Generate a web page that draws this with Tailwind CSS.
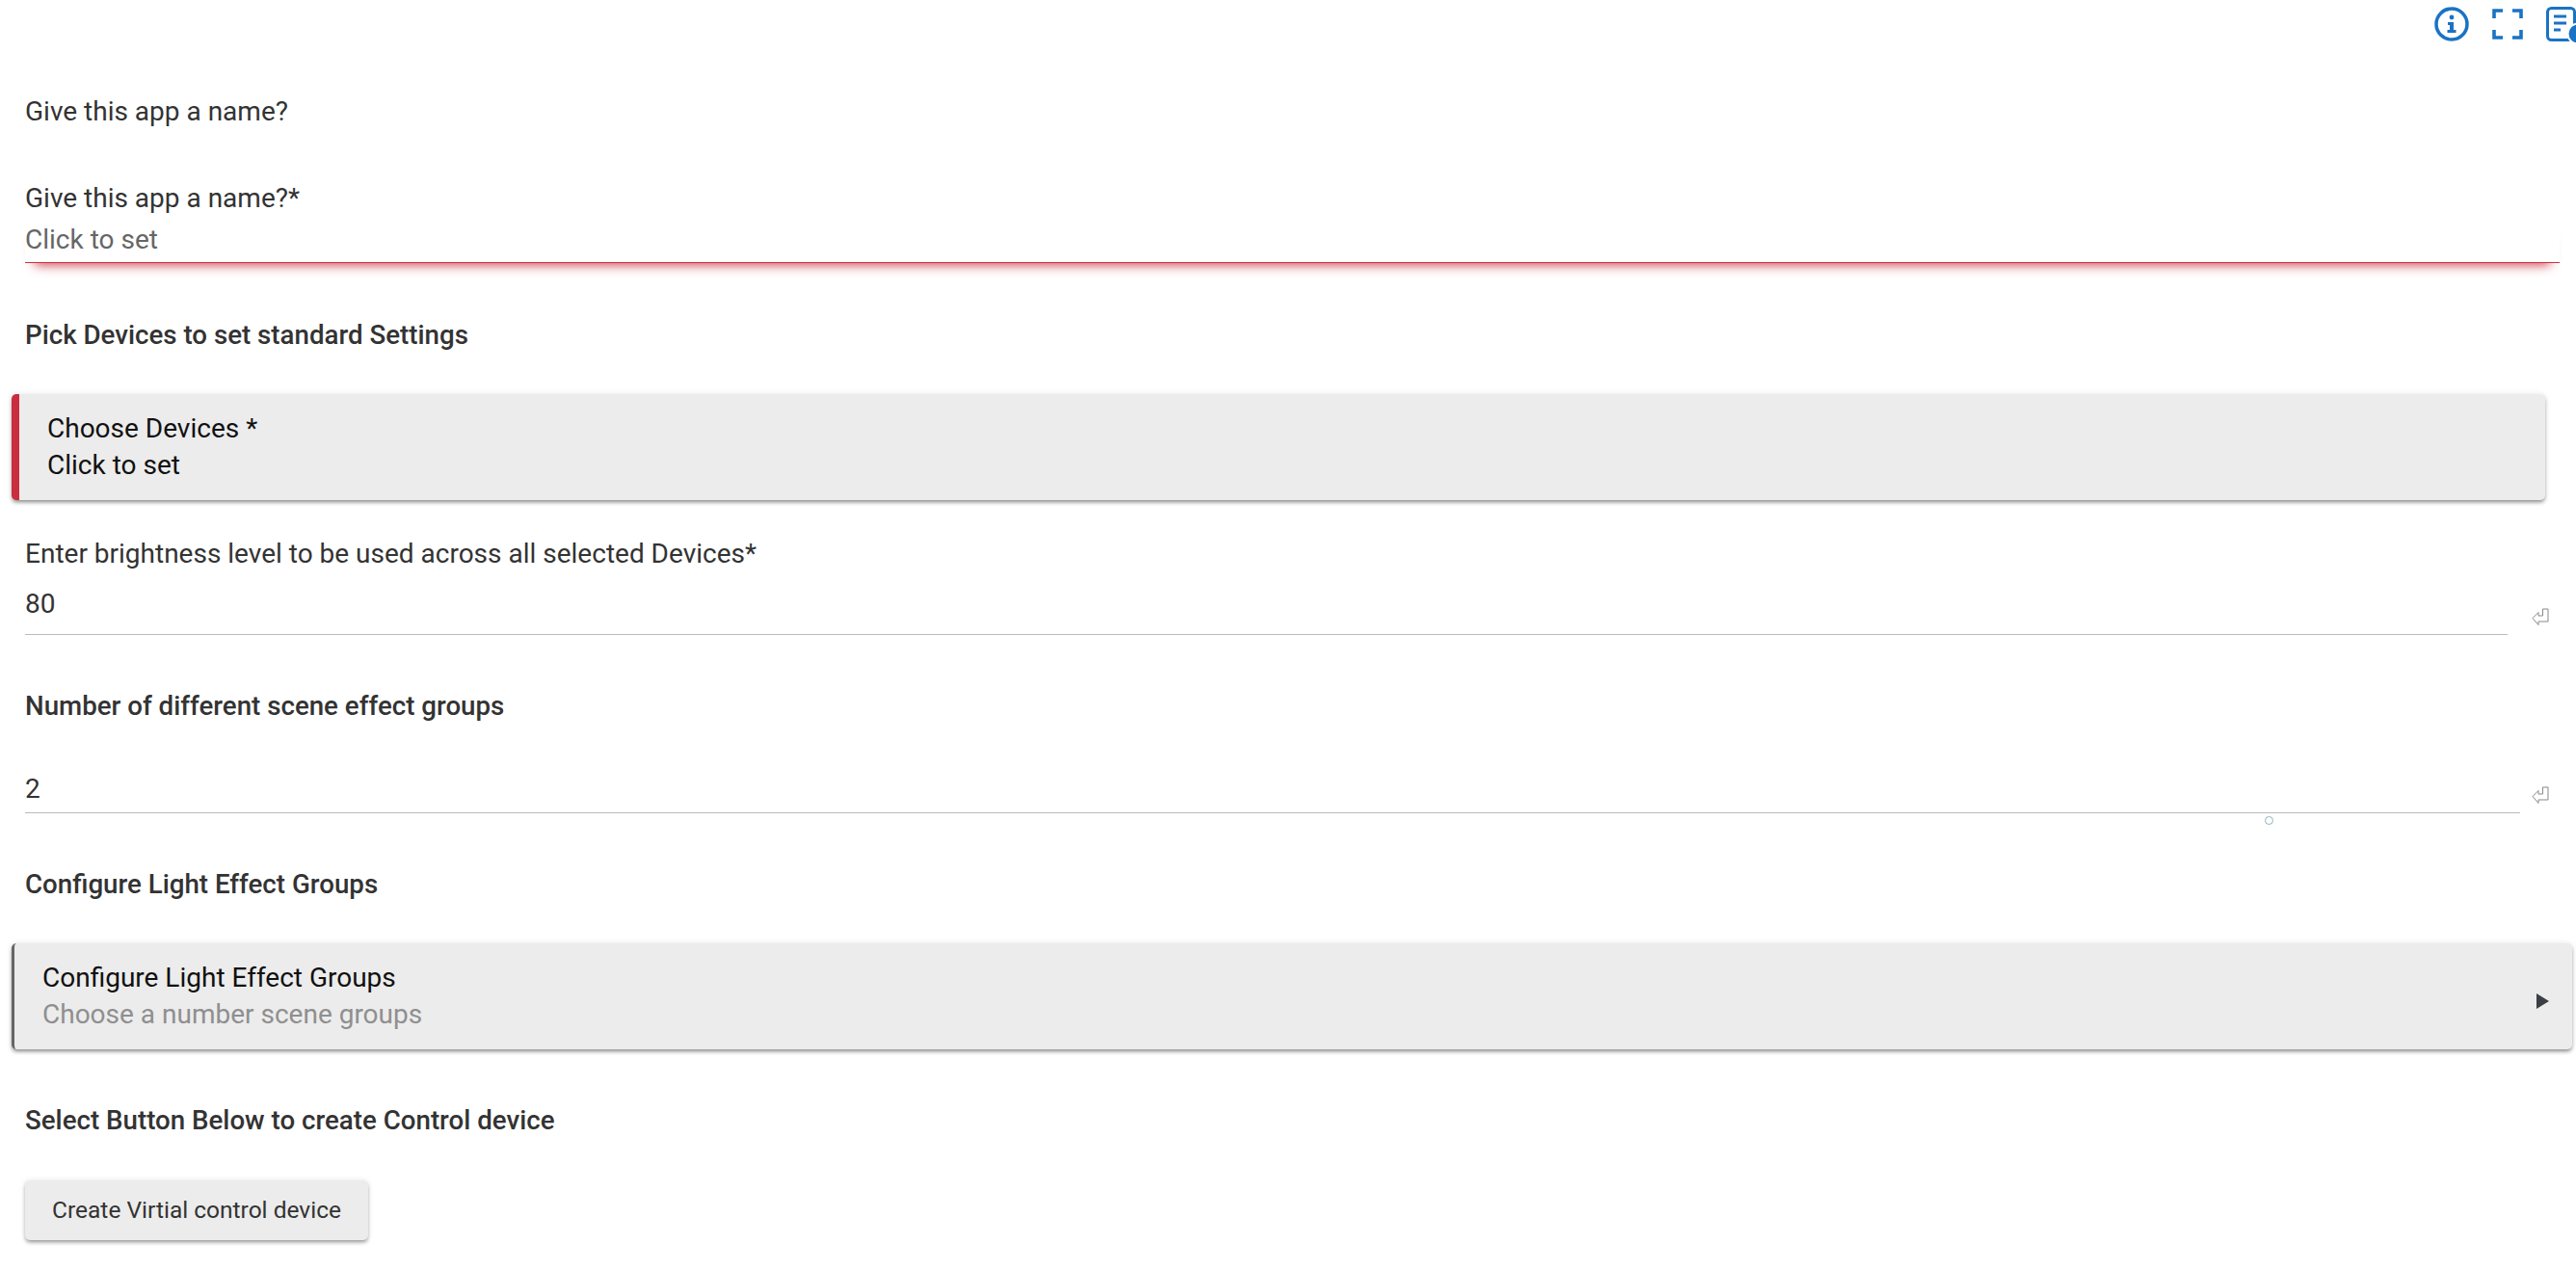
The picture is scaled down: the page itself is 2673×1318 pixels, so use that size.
<!DOCTYPE html>
<html lang="en">
<head>
    <meta charset="UTF-8">
    <meta name="viewport" content="width=device-width, initial-scale=1.0">
    <title>Create App</title>
    <script src="https://cdn.jsdelivr.net/npm/@tailwindcss/browser@4"></script>
</head>
<body class="bg-white font-['Roboto',sans-serif] text-[28px] leading-[42px] text-[#333] overflow-hidden h-[1318px] relative">
    <!-- top right tools -->
    <div class="h-[95px] flex justify-end items-start gap-[24px] pt-[7px] mr-[-13px] text-[#1a73c4]">
        <svg class="w-[36px] h-[36px]" viewBox="0 0 36 36" fill="none">
            <circle cx="18" cy="18" r="16" stroke="currentColor" stroke-width="3.5"/>
            <circle cx="18" cy="11" r="2.4" fill="currentColor"/>
            <path d="M14 16h6v8h2.500v3h-9v-3h2.500v-5h-2z" fill="currentColor"/>
        </svg>
        <svg class="w-[32px] h-[32px] mt-[2px]" viewBox="0 0 32 32" fill="none" stroke="currentColor" stroke-width="3.600">
            <path d="M2 10V2h9M21 2h9v8M30 22v8h-9M11 30H2v-8"/>
        </svg>
        <svg class="w-[44px] h-[37px]" viewBox="0 0 44 37" fill="none">
            <rect x="1.500" y="1.500" width="28" height="33" rx="4" stroke="currentColor" stroke-width="3"/>
            <path d="M8 10h13M8 17h13M8 24h7" stroke="currentColor" stroke-width="3"/>
            <circle cx="33" cy="28" r="10.500" fill="currentColor" stroke="white" stroke-width="2"/>
        </svg>
    </div>

    <div class="pl-[26px]">
        <div>Give this app a name?</div>

        <div class="mt-[48px]">Give this app a name?*</div>
        <div class="mt-[1px] pb-[2px] mr-[17px] text-[#666] border-b border-[#c9303f] shadow-[0_12px_12px_-10px_rgba(201,48,63,0.9)]">Click to set</div>

        <div class="mt-[54px] font-medium text-[27.7px]">Pick Devices to set standard Settings</div>
    </div>

    <div class="mt-[40px] ml-[12px] w-[2629px] h-[110px] pl-[29px] pt-[17px] bg-[#ececec] border-l-[8px] border-[#c92d3e] rounded-[5px] leading-[38px] text-[#111] shadow-[0_3px_4px_-1px_rgba(0,0,0,0.45),0_0_6px_rgba(0,0,0,0.1)]">
        <div>Choose Devices *</div>
        <div>Click to set</div>
    </div>

    <div class="pl-[26px]">
        <div class="mt-[35px]">Enter brightness level to be used across all selected Devices*</div>
        <div class="flex items-end">
            <div class="mt-[10px] pb-[10px] w-[2576px] border-b border-[#bbb]">80</div>
            <svg class="ml-[25px] mb-[10px] w-[18px] h-[18px]" viewBox="0 0 18 18" fill="none" stroke="#888" stroke-width="1">
                <path d="M1 10.500 7 4.500V8h4.500V1H17v13H7v3.500z"/>
            </svg>
        </div>

        <div class="mt-[53px] font-medium text-[27.7px]">Number of different scene effect groups</div>
        <div class="flex items-end">
            <div class="mt-[44px] pb-[3px] w-[2589px] border-b border-[#bbb]">2</div>
            <svg class="ml-[12px] mb-[10px] w-[18px] h-[18px]" viewBox="0 0 18 18" fill="none" stroke="#888" stroke-width="1">
                <path d="M1 10.500 7 4.500V8h4.500V1H17v13H7v3.500z"/>
            </svg>
        </div>

        <div class="mt-[53px] font-medium text-[27.7px]">Configure Light Effect Groups</div>
    </div>

    <!-- small marker under the second input -->
    <div class="absolute left-[2350px] top-[847px] w-[9px] h-[9px] rounded-full border-[1.500px] border-[#8fb4b8]"></div>

    <div class="mt-[40px] ml-[12px] w-[2657px] h-[110px] pl-[29px] pr-[24px] bg-[#ececec] border-l-[3px] border-[#666] rounded-[5px] leading-[38px] flex items-center justify-between shadow-[0_3px_4px_-1px_rgba(0,0,0,0.45),0_0_6px_rgba(0,0,0,0.1)]">
        <div>
            <div class="text-[#111]">Configure Light Effect Groups</div>
            <div class="text-[#8f8f8f]">Choose a number scene groups</div>
        </div>
        <svg class="w-[13px] h-[16px] mt-[9px]" viewBox="0 0 13 16" fill="#3a3f45"><path d="M0 0l13 8-13 8z"/></svg>
    </div>

    <div class="pl-[26px]">
        <div class="mt-[53px] font-medium text-[27.7px]">Select Button Below to create Control device</div>
        <button class="mt-[41px] w-[356px] h-[62px] bg-[#ececec] rounded-[5px] text-[24.5px] text-[#333] shadow-[0_3px_4px_-1px_rgba(0,0,0,0.4),0_0_6px_rgba(0,0,0,0.1)]">Create Virtial control device</button>
    </div>
</body>
</html>
